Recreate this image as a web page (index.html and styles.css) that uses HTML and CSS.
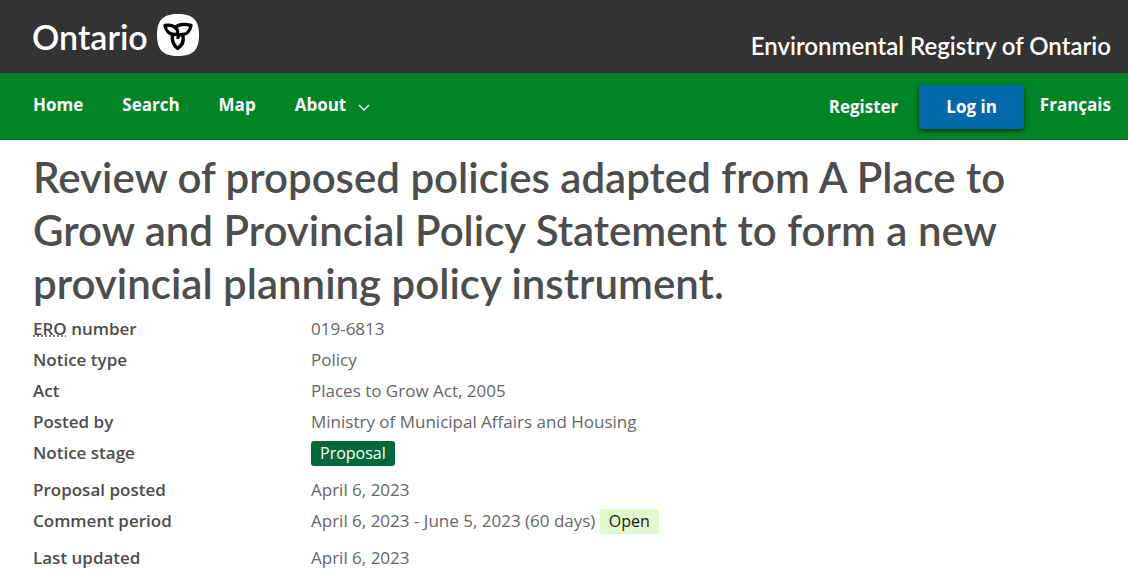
FILE: index.html
```html
<!DOCTYPE html>
<html lang="en">
<head>
<meta charset="utf-8">
<meta name="viewport" content="width=device-width, initial-scale=1">
<title>Environmental Registry of Ontario</title>
<link rel="stylesheet" href="styles.css">
</head>
<body>
<header class="masthead">
  <a class="brand" href="#">
    <span class="brand-name">Ontario</span>
    <svg class="brand-mark" viewBox="0 0 42 42" aria-hidden="true">
      <path fill="#fff" d="M21 0C36 0 42 6 42 21S36 42 21 42 0 36 0 21 6 0 21 0Z"/>
      <g fill="none" stroke="#000" stroke-width="3.400" stroke-linejoin="round" stroke-linecap="round">
        <path d="M20 15.500C17 11.500 12.500 10.500 8 11.500C9 17.500 13 20.500 17.500 20.500C20 20.500 21 19 20.500 17"/>
        <path d="M18 13.500C21.500 10.500 28 9.800 34 11.500C33 17 29.500 20.500 25.500 20.500C23 20.500 21 21 21 23.500"/>
        <path d="M15.500 21.500C14.500 26.500 16.500 31 20.700 34.500C25.500 31 27 26.500 26 22"/>
      </g>
    </svg>
  </a>
  <a class="site-title" href="#">Environmental Registry of Ontario</a>
</header>
<nav class="navbar" aria-label="Main">
  <div class="nav-links">
    <a href="#">Home</a>
    <a href="#">Search</a>
    <a href="#">Map</a>
    <button class="nav-menu" type="button">About
      <svg class="chevron" viewBox="0 0 12 8" aria-hidden="true"><path d="M1 1L6 6L11 1" fill="none" stroke="#fff" stroke-width="1.400"/></svg>
    </button>
  </div>
  <div class="nav-account">
    <a href="#">Register</a>
    <a class="login" href="#">Log in</a>
    <a class="language" href="#" lang="fr">Français</a>
  </div>
</nav>
<main class="notice">
  <h1 class="notice-title">Review of proposed policies adapted from A Place to Grow and Provincial Policy Statement to form a new provincial planning policy instrument.</h1>
  <dl class="details">
    <div class="row"><dt><abbr title="Environmental Registry of Ontario">ERO</abbr> number</dt><dd>019-6813</dd></div>
    <div class="row"><dt>Notice type</dt><dd>Policy</dd></div>
    <div class="row"><dt>Act</dt><dd>Places to Grow Act, 2005</dd></div>
    <div class="row"><dt>Posted by</dt><dd>Ministry of Municipal Affairs and Housing</dd></div>
    <div class="row row-tagged"><dt>Notice stage</dt><dd><span class="tag tag-stage">Proposal</span></dd></div>
    <div class="row"><dt>Proposal posted</dt><dd>April 6, 2023</dd></div>
    <div class="row row-tagged"><dt>Comment period</dt><dd>April 6, 2023 - June 5, 2023 (60 days) <span class="tag tag-open">Open</span></dd></div>
    <div class="row"><dt>Last updated</dt><dd>April 6, 2023</dd></div>
  </dl>
</main>
</body>
</html>
```
FILE: styles.css
```css
* {
  box-sizing: border-box;
}

body {
  margin: 0;
  background: #fff;
  color: #4d4d4d;
  font-family: "Open Sans", "Noto Sans", sans-serif;
  font-size: 17px;
  line-height: 26px;
}

a {
  color: inherit;
  text-decoration: none;
}

.masthead {
  display: flex;
  justify-content: space-between;
  align-items: flex-start;
  padding: 14px 17px 11px 32px;
  background: #333;
  color: #fff;
  font-family: Lato, sans-serif;
}

.brand {
  display: flex;
  align-items: flex-start;
  gap: 9px;
}

.brand-name {
  padding-top: 4px;
  font-size: 34px;
  line-height: 38px;
  font-weight: 600;
}

.brand-mark {
  width: 42px;
  height: 42px;
}

.site-title {
  margin-top: 16px;
  font-size: 24px;
  line-height: 32px;
  font-weight: 600;
}

.navbar {
  display: flex;
  justify-content: space-between;
  padding: 12px 17px 10px 33px;
  background: #008425;
  border-bottom: 1px solid #0b6f28;
  color: #fff;
  font-weight: 700;
}

.nav-links {
  display: flex;
  align-items: flex-start;
  gap: 39px;
  padding-top: 7px;
}

.nav-menu {
  display: flex;
  align-items: center;
  gap: 12px;
  padding: 0;
  border: 0;
  background: none;
  color: inherit;
  font: inherit;
}

.chevron {
  width: 12px;
  height: 8px;
  margin-top: 5px;
}

.nav-account {
  display: flex;
  align-items: center;
}

.login {
  margin: 0 16px 0 21px;
  padding: 9px 27px;
  border-radius: 4px;
  background: #0069ac;
  box-shadow: 0 2px 4px rgba(0, 0, 0, 0.6);
}

.language {
  padding-bottom: 4px;
}

.notice {
  padding: 11px 32px 0 33px;
}

.notice-title {
  max-width: 1020px;
  margin: 0 0 4px;
  font-family: Lato, sans-serif;
  font-size: 42px;
  line-height: 53px;
  font-weight: 600;
}

.details {
  margin: 0;
}

.row {
  display: grid;
  grid-template-columns: 278px 1fr;
  min-height: 31px;
  padding-top: 2px;
}

.row-tagged {
  min-height: 37px;
}

dt {
  font-weight: 600;
}

dd {
  margin: 0;
  color: #666;
}

abbr {
  text-decoration: underline dotted;
}

.tag {
  display: inline-block;
  padding: 0 9px;
  border-radius: 3px;
  font-size: 16px;
  line-height: 25px;
}

.tag-stage {
  background: #00693c;
  color: #fff;
}

.tag-open {
  background: #e2f9cc;
  color: #1a1a1a;
}
```
